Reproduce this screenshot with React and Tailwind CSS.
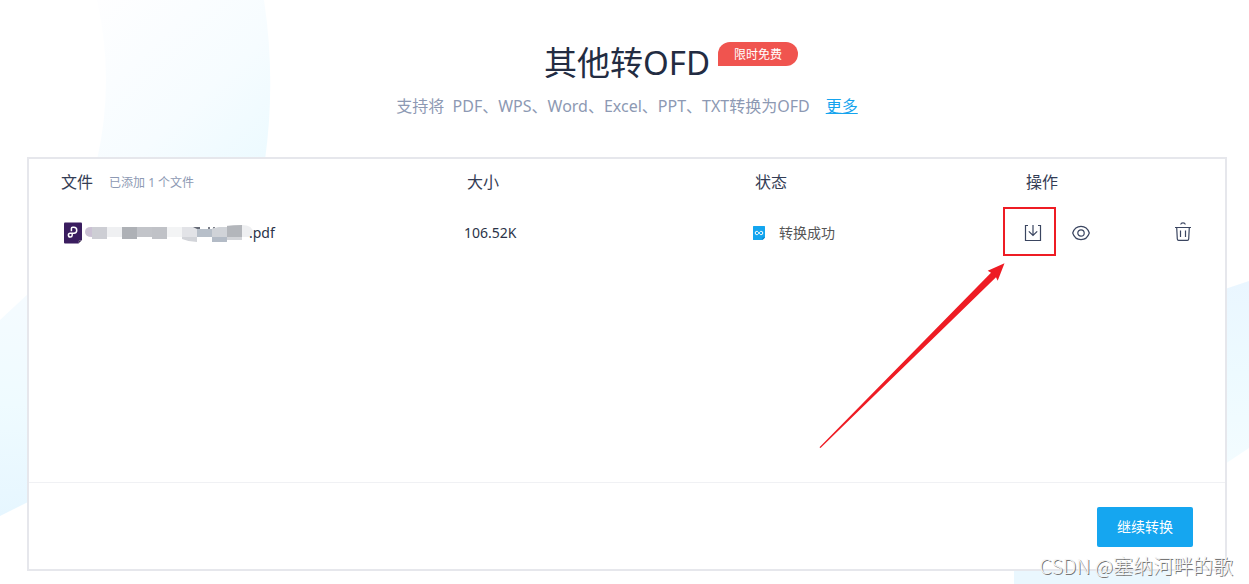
function Backdrop() {
  return (
    <div aria-hidden="true" className="pointer-events-none absolute inset-0 -z-10 overflow-hidden">
      <svg className="absolute left-0 top-0" width="290" height="584" viewBox="0 0 290 584">
        <defs>
          <linearGradient id="crescent" x1="0" y1="0" x2="1" y2="1">
            <stop offset="0" stopColor="#fefeff" />
            <stop offset="0.6" stopColor="#f6fcff" />
            <stop offset="1" stopColor="#ecfaff" />
          </linearGradient>
          <linearGradient id="leftArc" x1="0" y1="0" x2="0" y2="1">
            <stop offset="0" stopColor="#f5fbff" />
            <stop offset="0.5" stopColor="#effbff" />
            <stop offset="1" stopColor="#e6f6ff" />
          </linearGradient>
        </defs>
        <path d="M97 0Q115 80 97 160H265Q276 80 264 0Z" fill="url(#crescent)" />
        <path d="M0 320L30 292V501L0 516Z" fill="url(#leftArc)" />
      </svg>
      <svg className="absolute right-0 top-0" width="240" height="584" viewBox="0 0 240 584">
        <defs>
          <linearGradient id="rightArc" x1="0" y1="0" x2="0" y2="1">
            <stop offset="0" stopColor="#eaf6ff" />
            <stop offset="0.5" stopColor="#edfaff" />
            <stop offset="1" stopColor="#f3fcff" />
          </linearGradient>
        </defs>
        <path d="M216 289L240 281V448L216 464Z" fill="url(#rightArc)" />
        <path d="M5 568H161V584H5Z" fill="#eaf7fe" />
      </svg>
    </div>
  );
}

function PdfIcon() {
  return (
    <svg aria-hidden="true" className="shrink-0" width="18" height="22" viewBox="0 0 18 22">
      <path d="M1 0.5H17Q18 0.5 18 1.5V18L14.5 21.5H1Q0 21.5 0 20.5V1.5Q0 0.5 1 0.5Z" fill="#3a1d5f" />
      <path d="M15 21V19Q15 18.500 15.500 18.500H17.500Z" fill="#140a22" stroke="#d8d2e0" strokeWidth="0.400" />
      <path d="M7.400 9.200V6.400Q7.400 5.300 8.600 5.300H9.800A2.900 2.900 0 0 1 9.800 11.200H6.200A1.900 1.900 0 1 0 8.200 13.200V11.400" fill="none" stroke="#fff" strokeWidth="1.500" />
    </svg>
  );
}

function OfdIcon() {
  return (
    <svg aria-hidden="true" className="shrink-0" width="12" height="14" viewBox="0 0 12 14">
      <path d="M0.500 0H11.500Q12 0 12 0.500V11.500L9.500 14H0.500Q0 14 0 13.500V0.500Q0 0 0.500 0Z" fill="#13a5ef" />
      <path d="M9.500 14V11.500H12Z" fill="#0b7fc4" />
      <path d="M6 7C5.200 5.900 4.700 5.300 3.900 5.300A1.700 1.700 0 0 0 3.900 8.700C4.700 8.700 5.200 8.100 6 7C6.800 5.900 7.300 5.300 8.100 5.300A1.700 1.700 0 0 1 8.100 8.700C7.300 8.700 6.800 8.100 6 7Z" fill="none" stroke="#fff" strokeWidth="1" />
    </svg>
  );
}

const tiles = [
  [0, 0, 7, 10, "#cbc1d4"], [7, 0, 15, 12, "#cdced4"], [22, 0, 15, 10, "#eff0f2"],
  [37, 0, 15, 12, "#aeb1b6"], [52, 0, 15, 10, "#c2c4c9"], [67, 0, 15, 12, "#c0c2c7"],
  [82, 0, 15, 10, "#f3f4f5"], [97, 0, 15, 10, "#e2e3e7"], [97, 10, 15, 5, "#d2d4d9"],
  [112, 2, 15, 8, "#b7bfc9"], [127, 0, 15, 10, "#d0d3d8"], [127, 10, 15, 5, "#b3bbc6"],
  [142, -2, 15, 12, "#b3b6bb"], [142, 10, 15, 3, "#d2d4d8"], [157, -2, 11, 12, "#eeeff1"],
];

function MaskedName() {
  return (
    <svg aria-hidden="true" className="shrink-0" width="168" height="18" viewBox="0 -3 168 18">
      <defs>
        <clipPath id="brush">
          <path d="M6 0H108L112 2H125Q140 -2 157 -2Q168 -2 168 6Q168 10 157 13Q140 16 127 15V10H112V15Q104 15 97 12H7V10Q0 10 0 5Q0 0 6 0Z" />
        </clipPath>
      </defs>
      <path d="M108 1H115M124 0V3M129 0V3" stroke="#333a4a" strokeWidth="1.300" />
      <g clipPath="url(#brush)">
        {tiles.map(([x, y, w, h, c]) => (
          <rect key={`${x}-${y}`} x={x} y={y} width={w} height={h} fill={c} shapeRendering="crispEdges" />
        ))}
      </g>
    </svg>
  );
}

function DownloadIcon() {
  return (
    <svg aria-hidden="true" width="18" height="18" viewBox="0 0 18 18" fill="none" stroke="#3a4560" strokeWidth="1.200">
      <path d="M4 1.500H1.500V16.500H16.500V1.500H14" />
      <path d="M9 1V11.500M4.800 7.300L9 11.500L13.200 7.300" />
    </svg>
  );
}

function EyeIcon() {
  return (
    <svg aria-hidden="true" width="18" height="16" viewBox="0 0 18 16" fill="none" stroke="#3a4560" strokeWidth="1.200">
      <path d="M0.700 8C2 4 5.200 1.400 9 1.400S16 4 17.300 8C16 12 12.800 14.600 9 14.600S2 12 0.700 8Z" />
      <circle cx="9" cy="8" r="3.200" />
    </svg>
  );
}

function TrashIcon() {
  return (
    <svg aria-hidden="true" width="16" height="19" viewBox="0 0 16 19" fill="none" stroke="#3a4560" strokeWidth="1.200">
      <path d="M0 5.500H16M5.700 2.500Q6 0.800 8 0.800T10.300 2.500" />
      <path d="M1.700 5.500L2.300 17Q2.400 18.300 3.600 18.300H12.400Q13.600 18.300 13.700 17L14.300 5.500" />
      <path d="M5.500 8.500V15M10.500 8.500V15" />
    </svg>
  );
}

function Pointer() {
  return (
    <svg aria-hidden="true" className="pointer-events-none absolute right-[219px] top-[101px]" width="188" height="190" viewBox="0 0 188 190">
      <path d="M186.500 3.300L169.700 10.700L173 12.700L1.500 187.300L2.500 188L178 17.300L179.700 20.700Z" fill="#ee1c24" />
    </svg>
  );
}

export default function App() {
  return (
    <div className="relative isolate min-h-screen overflow-hidden bg-white font-['Noto_Sans','Noto_Sans_CJK_SC',sans-serif] text-[#2b3348]">
      <Backdrop />
      <main className="pb-[13px] pl-[27px] pr-[22px] pt-[43px]">
        <header className="flex flex-col items-center">
          <div className="relative">
            <h1 className="text-[33px] leading-10 text-[#232c42]">其他转OFD</h1>
            <span className="absolute -top-px left-full ml-2 flex h-6 w-20 items-center justify-center rounded-full rounded-bl-none bg-[#f0544f] pt-0.5 text-xs text-white">
              限时免费
            </span>
          </div>
          <p className="mt-[11px] flex gap-4 text-base leading-6 text-[#8d99b3]">
            <span className="whitespace-pre">支持将  PDF、WPS、Word、Excel、PPT、TXT转换为OFD</span>
            <a href="#more" className="text-[#15a4ee] underline">更多</a>
          </p>
        </header>

        <section className="relative mt-[39px] border-2 border-[#e6e7ec] bg-white">
          <div className="min-h-[323px]">
            <table className="w-full table-fixed text-left">
              <colgroup>
                <col />
                <col className="w-[288px]" />
                <col className="w-[271px]" />
                <col className="w-[150px]" />
                <col className="w-[52px]" />
              </colgroup>
              <thead>
                <tr className="h-[46px] text-base text-[#343d55]">
                  <th className="pl-8 font-normal">
                    <div className="flex items-center gap-4">
                      文件
                      <span className="pt-0.5 text-xs text-[#8d99b3]">已添加 1 个文件</span>
                    </div>
                  </th>
                  <th className="pl-[3px] font-normal">大小</th>
                  <th className="pl-[3px] font-normal">状态</th>
                  <th className="pl-[3px] font-normal">操作</th>
                  <td />
                </tr>
              </thead>
              <tbody>
                <tr className="h-[56px] text-sm">
                  <td className="pl-[35px]">
                    <div className="flex items-center">
                      <PdfIcon />
                      <span className="ml-[3px] flex items-center">
                        <MaskedName />
                        <span className="-ml-1">.pdf</span>
                      </span>
                    </div>
                  </td>
                  <td>106.52K</td>
                  <td className="pl-px">
                    <div className="flex items-center gap-[14px] text-[#555]">
                      <OfdIcon />
                      转换成功
                    </div>
                  </td>
                  <td className="pl-px">
                    <div className="flex items-center gap-[30px]">
                      <button type="button" aria-label="下载" className="relative">
                        <DownloadIcon />
                        <span className="pointer-events-none absolute -left-[21px] -top-[17px] h-[49px] w-[53px] border-2 border-[#ee1c24]" />
                      </button>
                      <button type="button" aria-label="预览">
                        <EyeIcon />
                      </button>
                    </div>
                  </td>
                  <td className="pb-1 pl-0.5">
                    <button type="button" aria-label="删除" className="block">
                      <TrashIcon />
                    </button>
                  </td>
                </tr>
              </tbody>
            </table>
          </div>
          <footer className="flex justify-end border-t border-[#f0f1f4] px-8 pb-[22px] pt-6">
            <button type="button" className="h-10 w-24 rounded-xs bg-[#15a6f0] text-sm text-white">继续转换</button>
          </footer>
          <Pointer />
        </section>
      </main>
      <p className="pointer-events-none absolute bottom-1 right-4 font-['Noto_Sans_CJK_SC',sans-serif] text-xl font-light leading-7 text-[#f4f4f4] [text-shadow:1px_1px_0_#777]">
        CSDN @塞纳河畔的歌
      </p>
    </div>
  );
}
